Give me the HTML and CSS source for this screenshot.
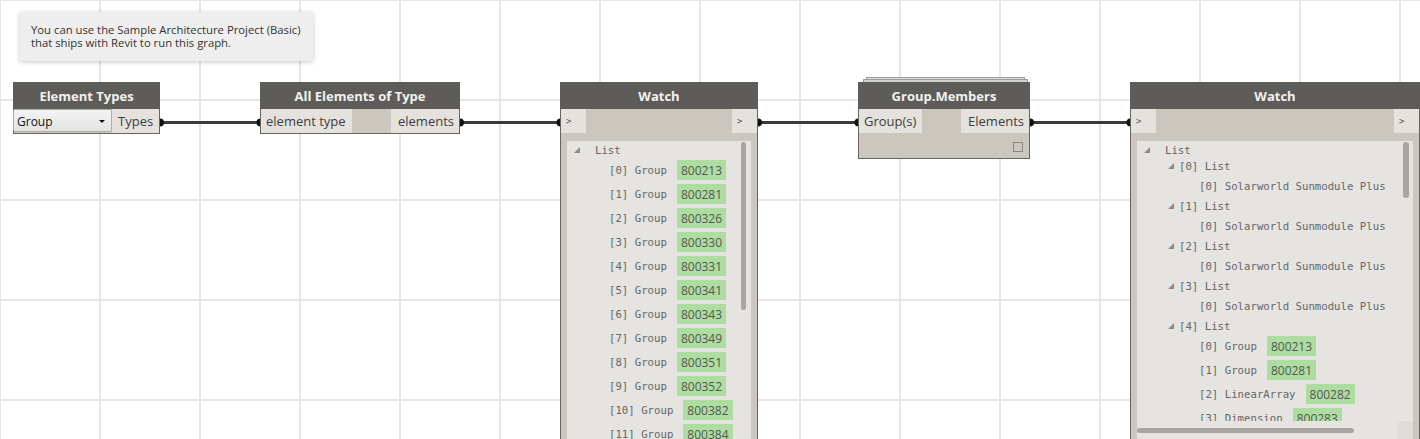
FILE: index.html
```html
<!DOCTYPE html>
<html>
<head>
<meta charset="utf-8">
<link rel="stylesheet" href="styles.css">
</head>
<body>
<div class="canvas">
  <svg class="wires" width="1420" height="439" viewBox="0 0 1420 439">
    <g stroke="#3a3a3a" stroke-width="3">
      <line x1="160" y1="122.5" x2="260" y2="122.5"/>
      <line x1="460" y1="122.5" x2="560" y2="122.5"/>
      <line x1="758" y1="122.5" x2="858" y2="122.5"/>
      <line x1="1030" y1="122.5" x2="1130" y2="122.5"/>
    </g>
    <g fill="#111">
      <circle cx="160" cy="122.5" r="4"/>
      <circle cx="260.5" cy="122.5" r="4"/>
      <circle cx="460" cy="122.5" r="4"/>
      <circle cx="560.5" cy="122.5" r="4"/>
      <circle cx="758" cy="122.5" r="4"/>
      <circle cx="858.5" cy="122.5" r="4"/>
      <circle cx="1030" cy="122.5" r="4"/>
      <circle cx="1130.5" cy="122.5" r="4"/>
    </g>
  </svg>

  <div class="note">You can use the Sample Architecture Project (Basic)<br>that ships with Revit to run this graph.</div>

  <div class="node n-types">
    <div class="node-head">Element Types</div>
    <div class="ports">
      <div class="dropdown"><span>Group</span><span class="caret"></span></div>
      <div class="port out">Types</div>
    </div>
  </div>

  <div class="node n-all">
    <div class="node-head">All Elements of Type</div>
    <div class="ports">
      <div class="port in">element type</div>
      <div class="port out">elements</div>
    </div>
  </div>

  <div class="node watch n-watch1">
    <div class="node-head">Watch</div>
    <div class="ports">
      <div class="port wport">&gt;</div>
      <div class="port wport">&gt;</div>
    </div>
    <div class="list">
      <div class="tree">
        <div class="row head h0"><span class="tri"><svg width="6" height="6" viewBox="0 0 6 6"><polygon points="0,6 6,6 6,0" fill="#8c8c8c"/></svg></span>List</div>
        <div class="row leaf l1"><span>[0] Group</span><span class="val">800213</span></div>
        <div class="row leaf l1"><span>[1] Group</span><span class="val">800281</span></div>
        <div class="row leaf l1"><span>[2] Group</span><span class="val">800326</span></div>
        <div class="row leaf l1"><span>[3] Group</span><span class="val">800330</span></div>
        <div class="row leaf l1"><span>[4] Group</span><span class="val">800331</span></div>
        <div class="row leaf l1"><span>[5] Group</span><span class="val">800341</span></div>
        <div class="row leaf l1"><span>[6] Group</span><span class="val">800343</span></div>
        <div class="row leaf l1"><span>[7] Group</span><span class="val">800349</span></div>
        <div class="row leaf l1"><span>[8] Group</span><span class="val">800351</span></div>
        <div class="row leaf l1"><span>[9] Group</span><span class="val">800352</span></div>
        <div class="row leaf l1"><span>[10] Group</span><span class="val">800382</span></div>
        <div class="row leaf l1"><span>[11] Group</span><span class="val">800384</span></div>
      </div>
      <div class="vbar vbar1"></div>
    </div>
  </div>

  <div class="node n-gm">
    <div class="stack stack-a"></div>
    <div class="stack stack-b"></div>
    <div class="node-head">Group.Members</div>
    <div class="ports">
      <div class="port in">Group(s)</div>
      <div class="port out">Elements</div>
    </div>
    <div class="gm-foot"><span class="check"></span></div>
  </div>

  <div class="node watch n-watch2">
    <div class="node-head">Watch</div>
    <div class="ports">
      <div class="port wport">&gt;</div>
      <div class="port wport">&gt;</div>
    </div>
    <div class="list list2">
      <div class="tree tree2">
        <div class="row head h0"><span class="tri"><svg width="6" height="6" viewBox="0 0 6 6"><polygon points="0,6 6,6 6,0" fill="#8c8c8c"/></svg></span>List</div>
        <div class="row head h1"><span class="tri tri1"><svg width="6" height="6" viewBox="0 0 6 6"><polygon points="0,6 6,6 6,0" fill="#8c8c8c"/></svg></span>[0] List</div>
        <div class="row leaf l2"><span>[0] Solarworld Sunmodule Plus</span></div>
        <div class="row head h1"><span class="tri tri1"><svg width="6" height="6" viewBox="0 0 6 6"><polygon points="0,6 6,6 6,0" fill="#8c8c8c"/></svg></span>[1] List</div>
        <div class="row leaf l2"><span>[0] Solarworld Sunmodule Plus</span></div>
        <div class="row head h1"><span class="tri tri1"><svg width="6" height="6" viewBox="0 0 6 6"><polygon points="0,6 6,6 6,0" fill="#8c8c8c"/></svg></span>[2] List</div>
        <div class="row leaf l2"><span>[0] Solarworld Sunmodule Plus</span></div>
        <div class="row head h1"><span class="tri tri1"><svg width="6" height="6" viewBox="0 0 6 6"><polygon points="0,6 6,6 6,0" fill="#8c8c8c"/></svg></span>[3] List</div>
        <div class="row leaf l2"><span>[0] Solarworld Sunmodule Plus</span></div>
        <div class="row head h1"><span class="tri tri1"><svg width="6" height="6" viewBox="0 0 6 6"><polygon points="0,6 6,6 6,0" fill="#8c8c8c"/></svg></span>[4] List</div>
        <div class="row leaf l2"><span>[0] Group</span><span class="val">800213</span></div>
        <div class="row leaf l2"><span>[1] Group</span><span class="val">800281</span></div>
        <div class="row leaf l2"><span>[2] LinearArray</span><span class="val">800282</span></div>
        <div class="row leaf l2"><span>[3] Dimension</span><span class="val">800283</span></div>
      </div>
      <div class="vbar vbar2"></div>
      <div class="hstrip"><div class="hbar"></div><div class="corner"></div></div>
    </div>
  </div>
</div>
</body>
</html>
```

FILE: styles.css
```css
body {
  margin: 0;
  overflow: hidden;
  background: #fff;
  font-family: "Open Sans", "Noto Sans", sans-serif;
}

.canvas {
  position: relative;
  width: 1420px;
  height: 439px;
  overflow: hidden;
  background-color: #fff;
  background-image:
    linear-gradient(to right, #e6e6e6 2px, transparent 2px),
    linear-gradient(to bottom, #e6e6e6 2px, transparent 2px);
  background-size: 100px 100px;
  background-position: -1px -1px;
}

.wires {
  position: absolute;
  left: 0;
  top: 0;
}

.note {
  position: absolute;
  left: 20px;
  top: 12px;
  width: 293px;
  box-sizing: border-box;
  padding: 11px 11px 12px;
  background: #eeeeee;
  color: #333;
  font-size: 11.3px;
  line-height: 13px;
  box-shadow: 0 1px 5px rgba(0, 0, 0, 0.22);
}

.node {
  position: absolute;
  top: 82px;
  box-sizing: border-box;
  background: #cbc6be;
  border: 1px solid #67655f;
  display: flex;
  flex-direction: column;
}

.node-head {
  height: 26px;
  box-sizing: content-box;
  background: #5e5c58;
  color: #f1f1f1;
  font-weight: 700;
  font-size: 13px;
  line-height: 25px;
  text-align: center;
  margin: -1px -1px 0;
  padding-top: 2px;
  height: 25px;
}

.ports {
  display: flex;
  justify-content: space-between;
  height: 24px;
}

.port {
  background: #e5e2de;
  color: #3d3d3d;
  font-size: 13px;
  line-height: 25px;
  padding: 0 5px;
}

.port.in {
  padding: 0 6px 0 5px;
}

.port.out {
  padding: 0 5px 0 7px;
}

.n-types {
  left: 13px;
  width: 147px;
  height: 52px;
}

.dropdown {
  margin: 0 0 0 -1px;
  width: 99px;
  height: 23px;
  box-sizing: border-box;
  border: 1px solid #adadad;
  border-radius: 2px;
  background: linear-gradient(to bottom, #f3f3f3, #e4e4e4);
  display: flex;
  align-items: center;
  justify-content: space-between;
  padding: 1px 6px 0 3px;
  font-size: 12px;
  color: #111;
}

.caret {
  width: 0;
  height: 0;
  border-left: 3px solid transparent;
  border-right: 3px solid transparent;
  border-top: 3px solid #111;
  margin-top: 1px;
}

.n-types .port.out {
  flex: 1;
  padding: 0 4px 0 6px;
  text-align: left;
}

.n-all {
  left: 260px;
  width: 200px;
  height: 52px;
}

.n-gm {
  left: 858px;
  width: 172px;
  height: 77px;
}

.stack {
  position: absolute;
  box-sizing: border-box;
  border: 1px solid #9b9b9b;
  background: #dedede;
  height: 8px;
}

.stack-a {
  top: -6px;
  left: 7px;
  right: 4px;
}

.stack-b {
  top: -4px;
  left: 4px;
  right: 1px;
  background: #d2d2d2;
}

.n-gm .node-head {
  position: relative;
}

.gm-foot {
  height: 24px;
  display: flex;
  justify-content: flex-end;
  align-items: flex-start;
}

.check {
  width: 10px;
  height: 10px;
  box-sizing: border-box;
  border: 1px solid #8d8a86;
  margin: 9px 6px 0 0;
}

.watch {
  height: 420px;
}

.n-watch1 {
  left: 560px;
  width: 198px;
}

.n-watch2 {
  left: 1130px;
  width: 290px;
}

.wport {
  width: 25px;
  box-sizing: border-box;
  padding: 0 0 0 5px;
  font-family: "DejaVu Sans Mono", monospace;
  font-size: 9px;
  color: #555;
}

.list {
  margin: 8px 6px 0;
  background: #e5e4e1;
  position: relative;
  flex: 1;
  overflow: hidden;
}

.tree {
  font-family: "DejaVu Sans Mono", "Liberation Mono", monospace;
  font-size: 10.7px;
  color: #666;
}

.tree2 {
  height: 280px;
  width: 260px;
  overflow: hidden;
}

.row {
  display: flex;
  align-items: center;
  white-space: pre;
}

.head {
  height: 16px;
}

.leaf {
  height: 24px;
}

.tri {
  flex: none;
  width: 21px;
  display: flex;
  align-items: center;
}

.tri1 {
  width: 11px;
}

.h0 {
  padding-left: 7px;
  margin-top: 1px;
}

.h1 {
  padding-left: 31px;
}

.l1 {
  padding-left: 42px;
}

.l2 {
  padding-left: 62px;
}

.val {
  margin-left: 10px;
  background: #aedda1;
  height: 20px;
  padding: 0 4px;
  font-family: "Open Sans", "Noto Sans", sans-serif;
  font-size: 12px;
  line-height: 21px;
  color: #555;
}

.vbar {
  position: absolute;
  top: 1px;
  width: 5px;
  background: #a8a6a2;
  border-radius: 3px;
}

.vbar1 {
  right: 5px;
  height: 168px;
}

.vbar2 {
  right: 4px;
  width: 6px;
  height: 56px;
}

.hstrip {
  position: relative;
  height: 20px;
}

.hbar {
  position: absolute;
  left: 0;
  top: 7px;
  width: 217px;
  height: 5px;
  background: #a8a6a2;
  border-radius: 3px;
}

.corner {
  position: absolute;
  right: 0;
  top: 0;
  width: 16px;
  height: 20px;
  background: #dddcd8;
}
```
